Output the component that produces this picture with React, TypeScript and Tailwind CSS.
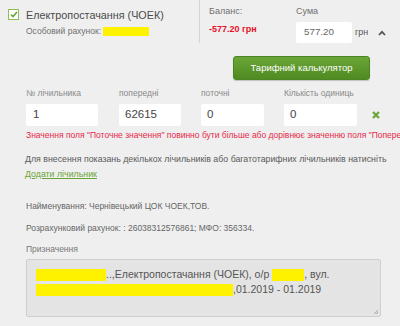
import React from "react";

const Y = ({ w, h = 12, className = "" }: { w: number; h?: number; className?: string }) => (
  <span className={`inline-block bg-[#fff200] align-middle ${className}`} style={{ width: w, height: h }} />
);

export default function App() {
  return (
    <div className="w-[400px] h-[326px] overflow-hidden bg-[#efefef] text-[#555] relative" style={{ fontFamily: '"Liberation Sans", Arial, sans-serif' }}>
      {/* top */}
      <div className="flex h-[44px]">
        <div className="w-[199px] pl-[8px] pt-[9px] flex">
          <div className="w-[11px] h-[11px] bg-white border border-[#8cbf5a] flex items-center justify-center">
            <svg width="8" height="7" viewBox="0 0 8 7"><path d="M1 3.5 L3 5.5 L7 1" stroke="#6aa436" strokeWidth="1.6" fill="none" /></svg>
          </div>
          <div className="ml-[7px]">
            <div className="text-[10.8px] leading-[12px] text-[#4a4a4a]">Електропостачання (ЧОЕК)</div>
            <div className="mt-[5px] text-[8.5px] leading-[10px] text-[#707070] flex items-center">
              Особовий рахунок:<Y w={46} h={9} className="ml-[2px]" />
            </div>
          </div>
        </div>
        <div className="w-px h-[43px] bg-[#d4d4d4]" />
        <div className="pl-[9px] pt-[6px] w-[96px]">
          <div className="text-[9px] leading-[10px] text-[#707070]">Баланс:</div>
          <div className="mt-[8px] text-[9px] leading-[10px] font-bold text-[#e8102c]">-577.20 грн</div>
        </div>
        <div className="pt-[6px]">
          <div className="text-[9px] leading-[10px] text-[#707070]">Сума</div>
          <div className="flex items-center mt-[6px]">
            <div className="w-[56px] h-[21px] bg-white rounded-[2px] text-[9.8px] text-[#666] pl-[8px] flex items-center">577.20</div>
            <span className="ml-[3px] text-[9px] text-[#555]">грн</span>
            <svg className="ml-[10px]" width="8" height="6" viewBox="0 0 8 6"><path d="M1 5 L4 1.8 L7 5" stroke="#555" strokeWidth="1.8" fill="none" /></svg>
          </div>
        </div>
      </div>

      {/* button */}
      <div className="pl-[233px] mt-[12px]">
        <div className="w-[137px] h-[24px] rounded-[3px] bg-gradient-to-b from-[#6aa637] to-[#4f8a22] border border-[#4b8420] flex items-center justify-center text-white text-[9.5px] shadow-[0_1px_1px_rgba(0,0,0,0.2)]">
          Тарифний калькулятор
        </div>
      </div>

      {/* meters */}
      <div className="pl-[26px] mt-[8px] flex items-end">
        <div className="w-[93px]">
          <div className="text-[8.5px] leading-[10px] text-[#8a8a8a]">№ лічильника</div>
          <div className="mt-[6px] w-[72px] h-[22px] bg-white rounded-[2px] text-[11.5px] text-[#444] pl-[7px] flex items-center">1</div>
        </div>
        <div className="w-[82px]">
          <div className="text-[8.5px] leading-[10px] text-[#8a8a8a]">попередні</div>
          <div className="mt-[6px] w-[62px] h-[22px] bg-white rounded-[2px] text-[11.5px] text-[#444] pl-[6px] flex items-center">62615</div>
        </div>
        <div className="w-[83px]">
          <div className="text-[8.5px] leading-[10px] text-[#8a8a8a]">поточні</div>
          <div className="mt-[6px] w-[63px] h-[22px] bg-white rounded-[2px] text-[11.5px] text-[#444] pl-[6px] flex items-center">0</div>
        </div>
        <div className="w-[88px]">
          <div className="text-[8.5px] leading-[10px] text-[#8a8a8a]">Кількість одиниць</div>
          <div className="mt-[6px] w-[73px] h-[22px] bg-white rounded-[2px] text-[11.5px] text-[#444] pl-[6px] flex items-center">0</div>
        </div>
        <div className="h-[22px] flex items-center">
          <svg width="8" height="8" viewBox="0 0 8 8"><path d="M1 1 L7 7 M7 1 L1 7" stroke="#6aa436" strokeWidth="2.2" /></svg>
        </div>
      </div>

      <div className="pl-[26px] mt-[4px] text-[8.5px] leading-[10px] text-[#e8284a] whitespace-nowrap overflow-hidden">
        Значення поля "Поточне значення" повинно бути більше або дорівнює значенню поля "Попередні"
      </div>

      <div className="pl-[25px] mt-[14px] text-[8.8px] leading-[10px] text-[#5a5a5a] whitespace-nowrap">
        Для внесення показань декількох лічильників або багатотарифних лічильників натисніть
      </div>
      <div className="pl-[25px] mt-[5px] text-[8.8px] leading-[10px] text-[#6aa436] underline">Додати лічильник</div>

      <div className="pl-[26px] mt-[22px] text-[8.5px] leading-[10px] text-[#666]">Найменування: Чернівецький ЦОК ЧОЕК,ТОВ.</div>
      <div className="pl-[26px] mt-[12px] text-[8.5px] leading-[10px] text-[#666]">Розрахунковий рахунок: : 26038312576861; МФО: 356334.</div>
      <div className="pl-[26px] mt-[11px] text-[8.5px] leading-[10px] text-[#777]">Призначення</div>

      <div className="ml-[26px] mt-[5px] w-[355px] h-[58px] bg-[#e4e4e4] border border-[#cfcfcf] rounded-[2px] relative pl-[9px] pt-[7px] text-[10.5px] leading-[15px] text-[#555]">
        <div className="flex items-center whitespace-nowrap">
          <Y w={70} h={12} />
          <span>..,Електропостачання (ЧОЕК), о/р</span>
          <Y w={32} h={12} className="ml-[3px]" />
          <span>, вул.</span>
        </div>
        <div className="flex items-center whitespace-nowrap">
          <Y w={197} h={12} />
          <span>,01.2019 - 01.2019</span>
        </div>
        <svg className="absolute right-[1px] bottom-[1px]" width="6" height="6" viewBox="0 0 6 6"><path d="M5 1 L1 5 M5 3 L3 5" stroke="#999" strokeWidth="0.8" /></svg>
      </div>
    </div>
  );
}
